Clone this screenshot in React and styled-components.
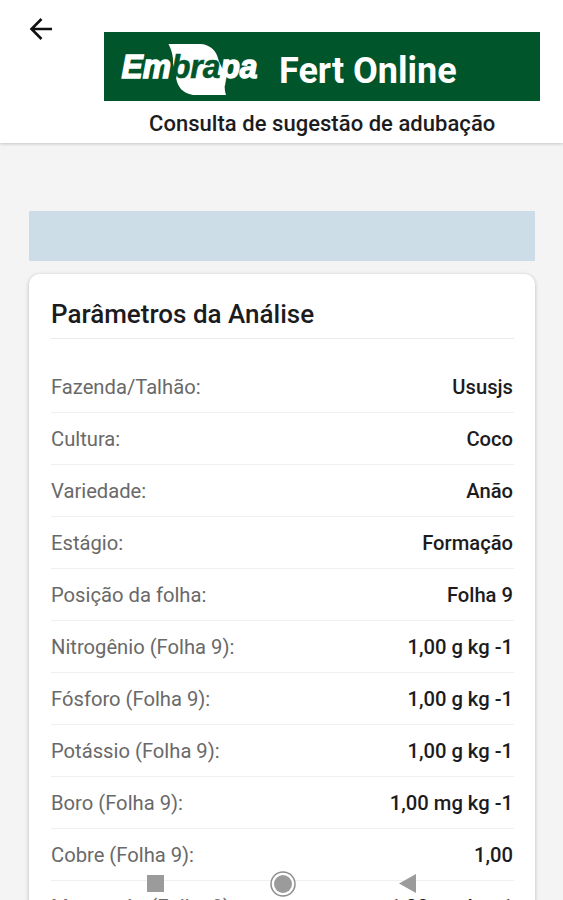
import React from 'react';
import styled, {createGlobalStyle} from "styled-components";

const GlobalStyle = createGlobalStyle`
*{
box-sizing: border-box;
}
body{
margin: 0;
background-color: #f4f4f4;
font-family: Roboto, "Liberation Sans", sans-serif;
overflow: hidden;
}
`;
const Screen = styled.main`
position: relative;
height: 900px;
overflow: hidden;
background-color: #f4f4f4;
`;
const Header = styled.header`
display: flex;
align-items: flex-start;
height: 143px;
padding-right: 23px;
background-color: #ffffff;
box-shadow: 0 1px 3px rgba(0,0,0,.2);
`;
const BackButton = styled.button`
width: 104px;
height: 57px;
padding: 0 0 0 29px;
border: none;
background: none;
display: flex;
align-items: center;
`;
const Heading = styled.div`
flex: 1;
padding-top: 32px;
`;
const Banner = styled.div`
display: flex;
align-items: center;
height: 69px;
background-color: #00552a;
`;
const Logo = styled.svg`
flex: none;
margin-left: 14px;
`;
const AppName = styled.h1`
margin: 9px 0 0 17px;
font-weight: 700;
font-size: 36px;
line-height: 42px;
white-space: nowrap;
color: #ffffff;
`;
const Subtitle = styled.p`
margin: 10px 0 0 45px;
font-weight: 500;
font-size: 22px;
line-height: 26px;
letter-spacing: .04px;
white-space: nowrap;
color: #1c1c1e;
`;
const Content = styled.section`
padding: 68px 28px 0 29px;
`;
const Notice = styled.div`
height: 50px;
background-color: #ccdde7;
`;
const Card = styled.div`
height: 700px;
margin-top: 13px;
padding: 23px 21px 0 22px;
border-radius: 11px;
background-color: #ffffff;
box-shadow: 0 1px 4px rgba(0,0,0,.24);
`;
const CardTitle = styled.h2`
height: 42px;
margin: 0 0 22px;
border-bottom: 1px solid #e9e9e9;
font-weight: 500;
font-size: 26px;
line-height: 35px;
white-space: nowrap;
color: #1c1c1e;
`;
const Row = styled.div`
display: flex;
justify-content: space-between;
height: 52px;
padding-right: 1px;
border-bottom: 1px solid #f0f0f0;
font-size: 20.2px;
line-height: 52px;
white-space: nowrap;
`;
const Label = styled.span`
color: #696969;
font-weight: 400;
`;
const Value = styled.span`
color: #1c1c1e;
font-weight: 500;
`;
const NavBar = styled.nav`
position: absolute;
left: 0;
right: 0;
bottom: 0;
height: 33px;
display: flex;
align-items: center;
padding-left: 147px;
`;
const NavIcon = styled.svg`
flex: none;
margin-right: ${props => props.$gap || 0}px;
`;

const rows = [
    {label: "Fazenda/Talhão:", value: "Ususjs"},
    {label: "Cultura:", value: "Coco"},
    {label: "Variedade:", value: "Anão"},
    {label: "Estágio:", value: "Formação"},
    {label: "Posição da folha:", value: "Folha 9"},
    {label: "Nitrogênio (Folha 9):", value: "1,00 g kg -1"},
    {label: "Fósforo (Folha 9):", value: "1,00 g kg -1"},
    {label: "Potássio (Folha 9):", value: "1,00 g kg -1"},
    {label: "Boro (Folha 9):", value: "1,00 mg kg -1"},
    {label: "Cobre (Folha 9):", value: "1,00"},
    {label: "Manganês (Folha 9):", value: "1,00 mg kg -1"},
];

const EmbrapaLogo = () => (
    <Logo width="144" height="60" viewBox="118 38 144 60" role="img" aria-label="Embrapa">
        <path fill="#ffffff" d="M168.5 45H201C211 46 216.5 52 218.5 61L226 78C224 84 224.5 91 226 96H193C182 94 178 88 176 79L173 64C173.5 57 171 50 168.5 45Z"/>
        <text
            x="121.5" y="79" textLength="136" lengthAdjust="spacingAndGlyphs"
            fontFamily="Liberation Sans, sans-serif" fontSize="33" fontWeight="700" fontStyle="italic"
            fill="#ffffff" stroke="#ffffff" strokeWidth="1.4"
        >
            Em<tspan fill="#00552a" stroke="#00552a" strokeWidth=".6">bra</tspan>pa
        </text>
    </Logo>
);

const App = () => {
    return (
        <Screen>
            <GlobalStyle/>
            <Header>
                <BackButton aria-label="Voltar">
                    <svg width="24" height="24" viewBox="0 0 24 24" fill="none" stroke="#111111" strokeWidth="2.6">
                        <path d="M23 12H2.5M12.5 2L2.5 12L12.5 22"/>
                    </svg>
                </BackButton>
                <Heading>
                    <Banner>
                        <EmbrapaLogo/>
                        <AppName>Fert Online</AppName>
                    </Banner>
                    <Subtitle>Consulta de sugestão de adubação</Subtitle>
                </Heading>
            </Header>
            <Content>
                <Notice/>
                <Card>
                    <CardTitle>Parâmetros da Análise</CardTitle>
                    {rows.map(row => (
                        <Row key={row.label}>
                            <Label>{row.label}</Label>
                            <Value>{row.value}</Value>
                        </Row>
                    ))}
                </Card>
            </Content>
            <NavBar>
                <NavIcon $gap={106} width="17" height="17" viewBox="0 0 17 17">
                    <rect width="17" height="17" fill="#9b9b9b"/>
                </NavIcon>
                <NavIcon $gap={103} width="26" height="26" viewBox="0 0 26 26">
                    <circle cx="13" cy="13" r="12" fill="#ffffff" stroke="#8e8e8e" strokeWidth="1.5"/>
                    <circle cx="13" cy="13" r="9" fill="#9b9b9b"/>
                </NavIcon>
                <NavIcon width="17" height="19" viewBox="0 0 17 19">
                    <path d="M0 9.5L17 0V19Z" fill="#9b9b9b"/>
                </NavIcon>
            </NavBar>
        </Screen>
    )
};

export default App
